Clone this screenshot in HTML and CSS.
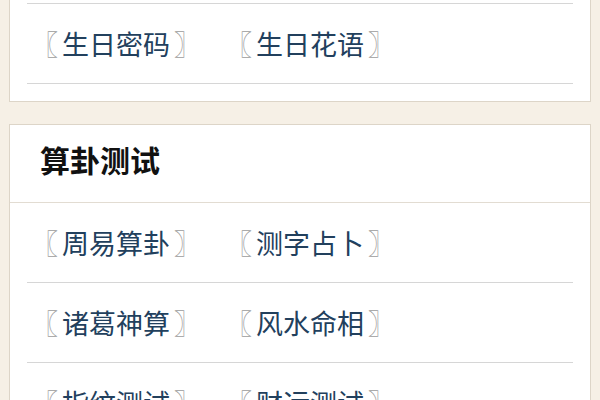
FILE: index.html
```html
<!DOCTYPE html>
<html lang="zh-CN">
<head>
<meta charset="utf-8">
<link rel="stylesheet" href="styles.css">
</head>
<body>
<div class="page">
  <section class="card card-top">
    <ul class="rows">
      <li class="row">
        <a class="item"><span class="br">〖</span><span class="txt">生日密码</span><span class="br">〗</span></a>
        <a class="item"><span class="br">〖</span><span class="txt">生日花语</span><span class="br">〗</span></a>
      </li>
    </ul>
  </section>
  <section class="card">
    <h2 class="title">算卦测试</h2>
    <ul class="rows">
      <li class="row">
        <a class="item"><span class="br">〖</span><span class="txt">周易算卦</span><span class="br">〗</span></a>
        <a class="item"><span class="br">〖</span><span class="txt">测字占卜</span><span class="br">〗</span></a>
      </li>
      <li class="row">
        <a class="item"><span class="br">〖</span><span class="txt">诸葛神算</span><span class="br">〗</span></a>
        <a class="item"><span class="br">〖</span><span class="txt">风水命相</span><span class="br">〗</span></a>
      </li>
      <li class="row">
        <a class="item"><span class="br">〖</span><span class="txt">指纹测试</span><span class="br">〗</span></a>
        <a class="item"><span class="br">〖</span><span class="txt">财运测试</span><span class="br">〗</span></a>
      </li>
    </ul>
  </section>
</div>
</body>
</html>
```
FILE: styles.css
```css
html, body {
  margin: 0;
  padding: 0;
  background: #f6f0e6;
  overflow: hidden;
}
.page {
  padding: 0 9px;
  font-family: "Noto Sans CJK SC", "Noto Sans", sans-serif;
}
.card {
  box-sizing: border-box;
  background: #fff;
  border: 1px solid #ddd5c8;
  margin-top: 22px;
}
.card-top {
  margin-top: -10px;
  padding: 12px 0 17px;
}
.title {
  box-sizing: border-box;
  margin: 0;
  height: 78px;
  padding: 0 0 10px 30px;
  display: flex;
  align-items: center;
  font-size: 30px;
  font-weight: bold;
  color: #111;
  border-bottom: 1px solid #e2dcd2;
}
.rows {
  list-style: none;
  margin: 0;
  padding: 0 17px;
}
.row {
  height: 79px;
  display: flex;
  align-items: center;
  border-bottom: 1px solid #d6d6d6;
}
.card-top .row {
  border-top: 1px solid #d6d6d6;
}
.item {
  display: flex;
  align-items: center;
  width: 194px;
  padding-left: 4px;
  box-sizing: border-box;
  font-size: 27px;
  color: #22405d;
}
.br {
  color: #9c9c9c;
}
.txt {
  margin: 0 4px;
}
```
